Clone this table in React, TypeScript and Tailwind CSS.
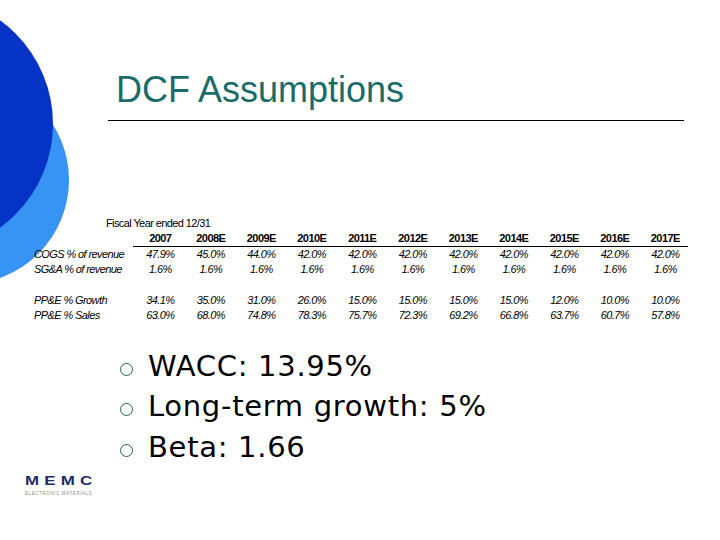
import React from "react";

const years = ["2007", "2008E", "2009E", "2010E", "2011E", "2012E", "2013E", "2014E", "2015E", "2016E", "2017E"];
const rows1 = [
  { label: "COGS % of revenue", v: ["47.9%", "45.0%", "44.0%", "42.0%", "42.0%", "42.0%", "42.0%", "42.0%", "42.0%", "42.0%", "42.0%"] },
  { label: "SG&A % of revenue", v: ["1.6%", "1.6%", "1.6%", "1.6%", "1.6%", "1.6%", "1.6%", "1.6%", "1.6%", "1.6%", "1.6%"] },
];
const rows2 = [
  { label: "PP&E % Growth", v: ["34.1%", "35.0%", "31.0%", "26.0%", "15.0%", "15.0%", "15.0%", "15.0%", "12.0%", "10.0%", "10.0%"] },
  { label: "PP&E % Sales", v: ["63.0%", "68.0%", "74.8%", "78.3%", "75.7%", "72.3%", "69.2%", "66.8%", "63.7%", "60.7%", "57.8%"] },
];

function Row({ label, v }: { label: string; v: string[] }) {
  return (
    <div className="flex h-[15px] items-center italic">
      <div className="w-[135px] shrink-0 pl-[34px] whitespace-nowrap">{label}</div>
      {v.map((x, i) => (
        <div key={i} className="w-[50.5px] shrink-0 text-center">{x}</div>
      ))}
    </div>
  );
}

function Bullet({ text }: { text: string }) {
  return (
    <div className="flex h-[40.5px] items-center">
      <div className="w-[148px] shrink-0 flex justify-end pr-[15px]">
        <span className="block mt-[6px] w-[13px] h-[13px] rounded-full border-[1.5px] border-[#22605e]" />
      </div>
      <span className="whitespace-nowrap">{text}</span>
    </div>
  );
}

export default function App() {
  return (
    <div className="relative w-[720px] h-[540px] bg-white overflow-hidden" style={{ fontFamily: '"Liberation Sans", Arial, sans-serif' }}>
      <div className="absolute left-[-139px] top-[76px] w-[208px] h-[208px] rounded-full bg-[#3894f4]" />
      <div className="absolute left-[-203px] top-[-4px] w-[256px] h-[256px] rounded-full bg-[#0433c6]" />

      <div className="relative flex flex-col">
        <div className="h-[70px]" />
        <div className="pl-[116px] text-[36px] leading-[40px] text-[#1b6b69]">DCF Assumptions</div>
        <div className="h-[10px]" />
        <div className="ml-[108px] w-[576px] border-t border-black" />

        <div className="h-[94px]" />
        <div className="text-[11px] tracking-[-0.6px] text-black">
          <div className="h-[16px] flex items-center pl-[106px]">Fiscal Year ended 12/31</div>
          <div className="flex h-[15px] items-center font-bold">
            <div className="w-[135px] shrink-0" />
            {years.map((y) => (
              <div key={y} className="w-[50.5px] shrink-0 text-center">{y}</div>
            ))}
          </div>
          <div className="ml-[133px] w-[555px] border-t-[1.5px] border-black" />
          {rows1.map((r) => (
            <Row key={r.label} {...r} />
          ))}
          <div className="h-[16px]" />
          {rows2.map((r) => (
            <Row key={r.label} {...r} />
          ))}
        </div>

        <div className="h-[23px]" />
        <div className="text-[29px] tracking-[0.7px] text-black" style={{ fontFamily: '"DejaVu Sans", Verdana, sans-serif' }}>
          <Bullet text="WACC: 13.95%" />
          <Bullet text="Long-term growth: 5%" />
          <Bullet text="Beta: 1.66" />
        </div>

        <div className="h-[7px]" />
        <div className="pl-[25px] flex flex-col w-[100px]">
          <div className="inline-block origin-left scale-x-[1.3] text-[13px] leading-[12px] font-bold tracking-[4px] text-[#1d2a6a]">MEMC</div>
          <div className="mt-[4px] text-[4.5px] leading-[5px] tracking-[0.6px] text-[#8a8a8a] whitespace-nowrap">ELECTRONIC MATERIALS</div>
        </div>
      </div>
    </div>
  );
}
